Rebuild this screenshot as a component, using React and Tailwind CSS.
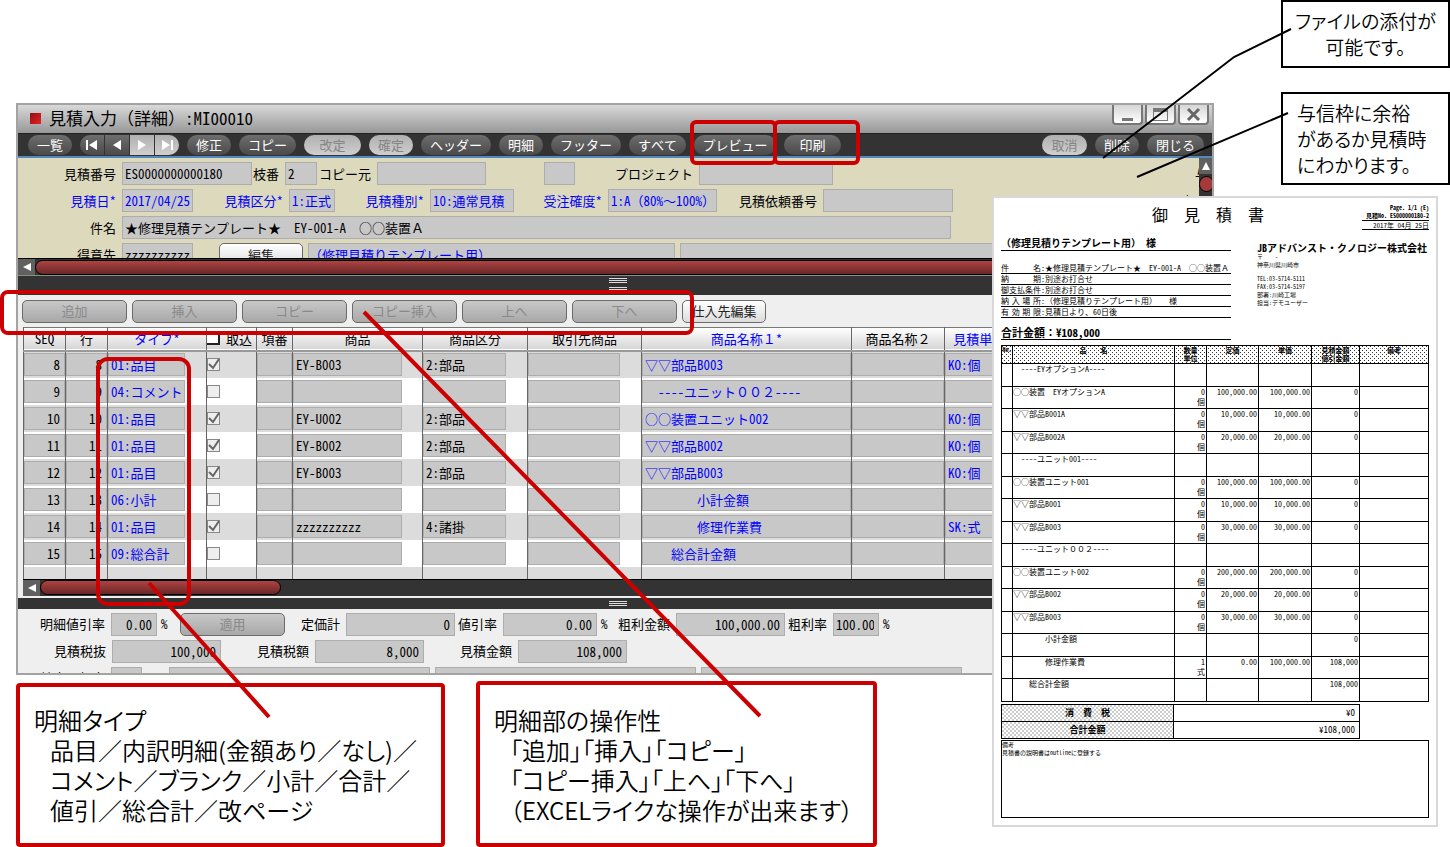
import { useId } from "react";

/* ================= DATA ================= */
const columns = [
  { label: "SEQ", width: "w-[42px]" },
  { label: "行", width: "w-[42px]" },
  { label: "タイプ*", width: "w-[99px]", blue: true },
  { label: "取込", width: "w-[50px]", check: true },
  { label: "項番", width: "w-[36px]" },
  { label: "商品", width: "w-[130px]" },
  { label: "商品区分", width: "w-[105px]" },
  { label: "取引先商品", width: "w-[114px]" },
  { label: "商品名称１*", width: "w-[210px]", blue: true },
  { label: "商品名称２", width: "w-[93px]" },
  { label: "見積単位*", width: "w-[76px]", blue: true },
];

const detailRows = [
  { seq: "8", type: "01:品目", on: true, item: "EY-B003", kind: "2:部品", name: "▽▽部品B003", unit: "KO:個" },
  { seq: "9", type: "04:コメント", on: false, item: "", kind: "", name: "　----ユニット００２----", unit: "" },
  { seq: "10", type: "01:品目", on: true, item: "EY-U002", kind: "2:部品", name: "○○装置ユニット002", unit: "KO:個" },
  { seq: "11", type: "01:品目", on: true, item: "EY-B002", kind: "2:部品", name: "▽▽部品B002", unit: "KO:個" },
  { seq: "12", type: "01:品目", on: true, item: "EY-B003", kind: "2:部品", name: "▽▽部品B003", unit: "KO:個" },
  { seq: "13", type: "06:小計", on: false, item: "", kind: "", name: "　　　　小計金額", unit: "" },
  { seq: "14", type: "01:品目", on: true, item: "zzzzzzzzzz", kind: "4:諸掛", name: "　　　　修理作業費", unit: "SK:式" },
  { seq: "15", type: "09:総合計", on: false, item: "", kind: "", name: "　　総合計金額", unit: "" },
];

const quoteRows = [
  ["　----EYオプションA----"],
  ["○○装置　EYオプションA", "0", "個", "100,000.00", "100,000.00", "0"],
  ["▽▽部品B001A", "0", "個", "10,000.00", "10,000.00", "0"],
  ["▽▽部品B002A", "0", "個", "20,000.00", "20,000.00", "0"],
  ["　----ユニット001----"],
  ["○○装置ユニット001", "0", "個", "100,000.00", "100,000.00", "0"],
  ["▽▽部品B001", "0", "個", "10,000.00", "10,000.00", "0"],
  ["▽▽部品B003", "0", "個", "30,000.00", "30,000.00", "0"],
  ["　----ユニット００２----"],
  ["○○装置ユニット002", "0", "個", "200,000.00", "200,000.00", "0"],
  ["▽▽部品B002", "0", "個", "20,000.00", "20,000.00", "0"],
  ["▽▽部品B003", "0", "個", "30,000.00", "30,000.00", "0"],
  ["　　　　小計金額", "", "", "", "", "0"],
  ["　　　　修理作業費", "1", "式", "0.00", "100,000.00", "108,000"],
  ["　　総合計金額", "", "", "", "", "108,000"],
];

const quoteTerms = [
  ["件名", "★修理見積テンプレート★　EY-001-A　○○装置Ａ"],
  ["納期", "別途お打合せ"],
  ["御支払条件", "別途お打合せ"],
  ["納入場所", "（修理見積りテンプレート用）　　様"],
  ["有効期限", "見積日より、60日後"],
];

/* ================= SHARED STYLES ================= */
const fieldBox = "h-[23px] border border-[#adadad] bg-[#c8c8c8] outline-none";
const dots =
  "bg-[conic-gradient(at_1px_1px,transparent_75%,#333_0),conic-gradient(at_1px_1px,transparent_75%,#333_0)] bg-[length:4px_4px] bg-[position:0_0,2px_2px]";

/* ================= FIELD ================= */
const Field = ({ label, labelWidth, width, value = "", blue, right }) => {
  const id = useId();
  const color = blue ? "text-[#0000ff]" : "text-black";
  return (
    <>
      <label htmlFor={id} className={`shrink-0 pr-1.5 text-right ${labelWidth} ${color}`}>
        {label}
      </label>
      <input
        id={id}
        readOnly
        defaultValue={value}
        className={`shrink-0 pl-0.5 ${right ? "pr-1 text-right" : "pr-0.5"} ${fieldBox} ${width} ${color}`}
      />
    </>
  );
};

/* ================= BUTTONS ================= */
const Pill = ({ children, width, off }) => (
  <button
    disabled={off}
    className={`h-5 shrink-0 rounded-full bg-linear-to-b ${width}
      ${off ? "from-[#b0b0b0] to-[#cfcfcf] text-[#858585]" : "from-[#6e6e6e] to-[#4a4a4a] text-white"}`}
  >
    {children}
  </button>
);

const PushButton = ({ children, width, off }) => (
  <button
    disabled={off}
    className={`h-[23px] shrink-0 rounded-[5px] border border-[#6b6b6b] bg-linear-to-b ${width}
      ${off ? "from-[#c8c8c8] to-[#a8a8a8] text-[#8a8a8a]" : "from-white to-[#dcdcdc] text-[#222]"}`}
  >
    {children}
  </button>
);

const NavButton = ({ label, off, shape, children }) => (
  <button
    aria-label={label}
    className={`flex h-5 w-6 items-center justify-center bg-linear-to-b ${shape}
      ${off ? "from-[#b0b0b0] to-[#cfcfcf]" : "from-[#6e6e6e] to-[#4a4a4a]"}`}
  >
    <svg width="14" height="10" viewBox="0 0 14 10" fill="#fff">
      {children}
    </svg>
  </button>
);

/* ================= SCROLLBAR / SPLITTER ================= */
const HorizontalBar = ({ thumb }) => (
  <div className="flex h-[17px] items-center border-t border-black bg-[#333]">
    <div className="flex h-4 w-[17px] shrink-0 items-center justify-center bg-[#606060]">
      <svg width="8" height="8" viewBox="0 0 8 8" fill="#fff">
        <path d="M8 0v8L0 4z" />
      </svg>
    </div>
    <div className={`h-[15px] rounded-full border border-black bg-linear-to-b from-[#b04343] to-[#6a2727] ${thumb}`} />
  </div>
);

const Grip = () => (
  <div className="h-[5px] w-[18px] border-y border-[#ddd] pt-px">
    <div className="h-px bg-[#ddd]" />
  </div>
);

/* ================= TITLE BAR ================= */
const TitleBar = () => (
  <header className="flex h-7 items-start bg-linear-to-b from-[#d9d9d9] to-[#989898]">
    <div className="ml-3 mt-2 size-[11px] bg-linear-to-br from-[#8f1010] to-[#e82222]" />
    <h1 className="ml-2 mt-px text-[17px] leading-6">見積入力（詳細）:MI00010</h1>
    <div className="ml-auto mr-[3px] flex gap-0.5">
      {[
        ["最小化", <path key="p" d="M10 13h11v3H10z" fill="#777" />],
        ["最大化", <path key="p" d="M8 3h15v13H8zM9 7v8h13V7z" fill="#777" fillRule="evenodd" />],
        ["閉じる", <path key="p" d="M10 4l11 11M21 4l-11 11" stroke="#666" strokeWidth="3" />],
      ].map(([label, icon]) => (
        <button
          key={label}
          aria-label={label}
          className="h-5 w-[31px] rounded-b border-2 border-t-0 border-[#777] bg-linear-to-b from-[#d6d6d6] to-white"
        >
          <svg width="27" height="18" viewBox="2 0 27 18">
            {icon}
          </svg>
        </button>
      ))}
    </div>
  </header>
);

/* ================= TOOLBAR ================= */
const Toolbar = () => (
  <nav className="flex h-[25px] items-center gap-2 border-b-2 border-t border-b-[#5288bd] border-t-[#222] bg-[#333] pl-2.5 pr-2">
    <Pill width="w-11">一覧</Pill>
    <div className="flex gap-px">
      <NavButton label="先頭" shape="rounded-l-full">
        <path d="M1 0h2v10H1zM12 0v10L4 5z" />
      </NavButton>
      <NavButton label="前へ">
        <path d="M11 0v10L3 5z" />
      </NavButton>
      <NavButton label="次へ" off>
        <path d="M3 0v10l8-5z" />
      </NavButton>
      <NavButton label="最後" off shape="rounded-r-full">
        <path d="M11 0h2v10h-2zM2 0v10l8-5z" />
      </NavButton>
    </div>
    <Pill width="w-11">修正</Pill>
    <Pill width="w-[57px]">コピー</Pill>
    <Pill width="w-[57px]" off>改定</Pill>
    <Pill width="w-11" off>確定</Pill>
    <Pill width="w-[70px]">ヘッダー</Pill>
    <Pill width="w-11">明細</Pill>
    <Pill width="w-[70px]">フッター</Pill>
    <Pill width="w-[57px]">すべて</Pill>
    <Pill width="w-[82px]">プレビュー</Pill>
    <Pill width="w-[57px]">印刷</Pill>
    <div className="ml-auto flex gap-2">
      <Pill width="w-[45px]" off>取消</Pill>
      <Pill width="w-11">削除</Pill>
      <Pill width="w-[57px]">閉じる</Pill>
    </div>
  </nav>
);

/* ================= HEADER FORM ================= */
const HeaderForm = () => (
  <div className="flex h-[100px] bg-[#dcd9bd]">
    <div className="min-w-0 flex-1 space-y-1 overflow-hidden pt-1">
      <div className="flex items-center">
        <Field label="見積番号" labelWidth="w-[104px]" width="w-[130px]" value="ES0000000000180" />
        <Field label="枝番" labelWidth="w-[33px]" width="w-8" value="2" />
        <Field label="コピー元" labelWidth="w-[60px]" width="w-[109px]" />
        <Field labelWidth="w-[58px]" width="w-[31px]" />
        <Field label="プロジェクト" labelWidth="w-[124px]" width="w-[134px]" />
        <span className="ml-auto w-1 overflow-hidden">与</span>
      </div>
      <div className="flex items-center">
        <Field label="見積日*" labelWidth="w-[104px]" width="w-[71px]" value="2017/04/25" blue />
        <Field label="見積区分*" labelWidth="w-24" width="w-[46px]" value="1:正式" blue />
        <Field label="見積種別*" labelWidth="w-[95px]" width="w-[84px]" value="10:通常見積" blue />
        <Field label="受注確度*" labelWidth="w-[94px]" width="w-[109px]" value="1:A（80%～100%）" blue />
        <Field label="見積依頼番号" labelWidth="w-[106px]" width="w-[130px]" />
        <span className="ml-auto w-4 overflow-hidden whitespace-nowrap">与</span>
      </div>
      <div className="flex items-center">
        <Field
          label="件名"
          labelWidth="w-[104px]"
          width="w-[829px]"
          value="★修理見積テンプレート★　EY-001-A　○○装置Ａ"
        />
      </div>
      <div className="flex items-center gap-[5px]">
        <div className="mr-[21px] flex items-center">
          <Field label="得意先" labelWidth="w-[104px]" width="w-[71px]" value="zzzzzzzzzz" />
        </div>
        <PushButton width="w-[84px]">編集</PushButton>
        <input
          aria-label="得意先名"
          readOnly
          defaultValue="（修理見積りテンプレート用）"
          className={`w-[367px] text-[#0000ff] ${fieldBox}`}
        />
        <input aria-label="得意先部署" readOnly className={`min-w-0 flex-1 ${fieldBox}`} />
      </div>
    </div>
    <div className="w-[13px] overflow-hidden bg-[#333]">
      <div className="flex h-4 items-center justify-center bg-[#606060]">
        <svg width="8" height="8" viewBox="0 0 8 8" fill="#fff">
          <path d="M0 8h8L4 0z" />
        </svg>
      </div>
      <div className="mt-0.5 h-4 w-[15px] rounded-full border border-black bg-[#a33b3b]" />
    </div>
  </div>
);

/* ================= DETAIL TABLE ================= */
const Cell = ({ value, label, width = "w-full", blue, right }) => (
  <input
    aria-label={label}
    readOnly
    defaultValue={value}
    className={`block pl-0.5 ${right ? "pr-1 text-right" : ""} ${width} ${blue ? "text-[#0000ff]" : ""} ${fieldBox}`}
  />
);

const Check = ({ label, on }) => (
  <label className="relative block size-[13px]">
    <input
      type="checkbox"
      aria-label={label}
      defaultChecked={on}
      className="peer block size-[13px] appearance-none border border-[#888] bg-[#eee]"
    />
    <svg
      className="pointer-events-none absolute inset-0 hidden peer-checked:block"
      viewBox="0 0 13 13"
      fill="none"
      stroke="#666"
      strokeWidth="2"
    >
      <path d="M2 6l4 4 6-9" />
    </svg>
  </label>
);

const DetailTable = () => (
  <table className="w-full table-fixed border-collapse border-t border-t-[#777]">
    <thead>
      <tr className="h-[23px] border-b-2 border-[#999] bg-linear-to-b from-white to-[#d6d6d6]">
        {columns.map((col) => (
          <th
            key={col.label}
            className={`border-l border-l-[#666] p-0 font-normal whitespace-nowrap ${col.width} ${col.blue ? "text-[#0000ff]" : ""}`}
          >
            {col.check ? (
              <label className="flex items-center gap-1.5">
                <input type="checkbox" className="size-[13px] appearance-none border-b-2 border-r-2 border-[#222] bg-white" />
                {col.label}
              </label>
            ) : (
              col.label
            )}
          </th>
        ))}
        <th className="border-l border-l-[#666]" />
      </tr>
    </thead>
    <tbody>
      {detailRows.map((row) => (
        <tr
          key={row.seq}
          className="h-[27px] odd:bg-[#dcdcdc] even:bg-white [&>td]:border-l [&>td]:border-l-[#666] [&>td]:p-0"
        >
          <td><Cell label="SEQ" value={row.seq} right /></td>
          <td><Cell label="行" value={row.seq} right /></td>
          <td><Cell label="タイプ" value={row.type} width="w-[77px]" blue /></td>
          <td><Check label="取込" on={row.on} /></td>
          <td><Cell label="項番" /></td>
          <td><Cell label="商品" value={row.item} width="w-[109px]" /></td>
          <td><Cell label="商品区分" value={row.kind} width="w-[83px]" /></td>
          <td><Cell label="取引先商品" width="w-[92px]" /></td>
          <td><Cell label="商品名称１" value={row.name} blue /></td>
          <td><Cell label="商品名称２" /></td>
          <td><Cell label="見積単位" value={row.unit} blue /></td>
          <td />
        </tr>
      ))}
      <tr className="h-3 bg-[#dcdcdc]">
        {columns.map((col) => (
          <td key={col.label} className="border-l border-l-[#666] p-0" />
        ))}
        <td className="border-l border-l-[#666] p-0" />
      </tr>
    </tbody>
  </table>
);

/* ================= FOOTER FORM ================= */
const FooterForm = () => (
  <div className="h-16 space-y-1 overflow-hidden bg-[#efefef] pt-1">
    <div className="flex items-center">
      <Field label="明細値引率" labelWidth="w-[93px]" width="w-[46px]" value="0.00" right />
      <span className="w-[23px] pl-1">%</span>
      <PushButton width="w-[105px]" off>適用</PushButton>
      <Field label="定価計" labelWidth="w-[61px]" width="w-[109px]" value="0" right />
      <Field label="値引率" labelWidth="w-12" width="w-[94px]" value="0.00" right />
      <span className="w-4 pl-1">%</span>
      <Field label="粗利金額" labelWidth="w-[63px]" width="w-[109px]" value="100,000.00" right />
      <Field label="粗利率" labelWidth="w-12" width="w-[46px]" value="100.00" right />
      <span className="pl-1">%</span>
    </div>
    <div className="flex items-center">
      <Field label="見積税抜" labelWidth="w-[94px]" width="w-[109px]" value="100,000" right />
      <Field label="見積税額" labelWidth="w-[94px]" width="w-[109px]" value="8,000" right />
      <Field label="見積金額" labelWidth="w-[94px]" width="w-[109px]" value="108,000" right />
    </div>
    <div className="flex items-center gap-[5px]">
      <div className="mr-[22px] flex items-center">
        <Field label="社内原価率" labelWidth="w-[93px]" width="w-[31px]" />
      </div>
      <input aria-label="備考１" readOnly className={`w-[261px] ${fieldBox}`} />
      <input aria-label="備考２" readOnly className={`w-[261px] ${fieldBox}`} />
      <input aria-label="備考３" readOnly className={`w-[261px] ${fieldBox}`} />
    </div>
  </div>
);

/* ================= PRINTED QUOTE ================= */
const Quote = () => (
  <article className="absolute right-3 top-[196px] w-[446px] border-2 border-[#d8d8d8] bg-white px-[7px] pb-[7px] pt-1.5 text-[8px] leading-[10px] text-black">
    <div className="flex h-[34px] justify-end">
      <h2 className="mr-[98px] text-[16px] leading-5">御　見　積　書</h2>
      <div className="w-[67px] text-right text-[7px] leading-2 whitespace-nowrap">
        <p className="text-[6px] font-bold">Page. 1/1 (E)</p>
        <p className="h-[9px] border-b border-black text-[6px] font-bold">見積No. ES000000180-2</p>
        <p className="h-[9px] border-b border-black">2017年 04月 25日</p>
      </div>
    </div>

    <div className="flex justify-between">
      <div className="w-[230px] whitespace-nowrap">
        <h3 className="h-[13px] border-b border-black text-[10px] font-bold leading-[10px]">
          （修理見積りテンプレート用） 様
        </h3>
        <dl className="mt-3">
          {quoteTerms.map(([name, value]) => (
            <div key={name} className="flex h-[11px] border-b border-black">
              <dt className="flex w-10 shrink-0 justify-between">
                {[...name].map((char) => (
                  <span key={char}>{char}</span>
                ))}
              </dt>
              <dd className="flex">
                <span className="w-1">:</span>
                {value}
              </dd>
            </div>
          ))}
        </dl>
        <p className="mt-2 border-b border-black text-[11px] font-bold leading-[13px]">合計金額：¥108,000</p>
      </div>
      <address className="mr-1 mt-1 w-[168px] whitespace-nowrap text-[6px] not-italic leading-2">
        <p className="text-[10px] font-bold leading-[11px]">JBアドバンスト・クノロジー株式会社</p>
        <p>〒　　-</p>
        <p>神奈川県川崎市</p>
        <p className="mt-1.5">TEL:03-5714-5111</p>
        <p>FAX:03-5714-5197</p>
        <p>部署:川崎工場</p>
        <p>担当:デモユーザー</p>
      </address>
    </div>

    <table className="mt-[5px] w-full table-fixed border-collapse border border-black">
      <thead>
        <tr className={`h-[18px] align-top text-[7px] leading-2 [&>th]:border [&>th]:border-black [&>th]:p-0 ${dots}`}>
          <th className="w-[11px] text-[6px]">No.</th>
          <th className="w-[162px]">品　　名</th>
          <th className="w-8">数量<br />単位</th>
          <th className="w-[52px]">定価</th>
          <th className="w-[53px]">単価</th>
          <th className="w-12">見積金額<br />値引金額</th>
          <th>備考</th>
        </tr>
      </thead>
      <tbody>
        {quoteRows.map(([name, count, unit, list, price, total], i) => (
          <tr
            key={i}
            className="odd:h-[23px] even:h-[22px] align-top text-right [&>td]:border [&>td]:border-black [&>td]:p-0 [&>td]:pr-px"
          >
            <td />
            <td className="whitespace-nowrap text-left">{name}</td>
            <td>
              {count}
              <br />
              {unit}
            </td>
            <td>{list}</td>
            <td>{price}</td>
            <td>{total}</td>
            <td />
          </tr>
        ))}
      </tbody>
    </table>

    <table className="mt-0.5 w-[359px] table-fixed border-collapse text-[9px]">
      <tbody>
        <tr className="h-[17px]">
          <th className={`w-[172px] border border-black p-0 ${dots}`}>消　費　税</th>
          <td className="border border-black p-0 pr-1 text-right">¥0</td>
        </tr>
        <tr className="h-[17px]">
          <th className={`border border-black p-0 ${dots}`}>合計金額</th>
          <td className="border border-black p-0 pr-1 text-right">¥108,000</td>
        </tr>
      </tbody>
    </table>

    <div className="mt-px h-[78px] border border-black text-[6px] leading-2">
      <p>備考</p>
      <p>見積書の説明書はoutlineに登録する</p>
    </div>
  </article>
);

/* ================= NOTES ================= */
const SideNote = ({ place, children }) => (
  <aside
    className={`absolute right-0 w-[169px] border-2 border-black bg-white text-[19px] font-[350] leading-[26px] whitespace-nowrap
      [font-family:'Noto_Sans_CJK_JP',sans-serif] [font-feature-settings:'palt'] ${place}`}
  >
    {children}
  </aside>
);

const Note = ({ title, lines, box }) => (
  <section
    className={`rounded-sm border-4 border-[#cc0000] bg-white pb-[18px] pl-3.5 text-[24px] font-[350] leading-[30px] whitespace-nowrap
      [font-family:'Noto_Sans_CJK_JP',sans-serif] [font-feature-settings:'palt'] ${box}`}
  >
    <h2>{title}</h2>
    {lines.map((line) => (
      <p key={line} className="pl-4">
        {line}
      </p>
    ))}
  </section>
);

const Highlight = ({ place }) => (
  <div className={`pointer-events-none absolute border-4 border-[#cc0000] ${place}`} />
);

/* ================= PAGE ================= */
const App = () => {
  return (
    <main className="relative min-h-screen overflow-hidden bg-white pl-4 pt-[103px] text-black [font-family:'Noto_Sans_Mono_CJK_JP','Noto_Sans_CJK_JP',monospace]">
      <section className="mr-[236px] border-2 border-[#a3a3a3] bg-[#efefef] text-[13px] leading-[18px]">
        <TitleBar />
        <Toolbar />
        <HeaderForm />
        <HorizontalBar thumb="flex-1" />
        <div className="flex h-5 flex-col gap-1 border-t border-[#8a9080] bg-[#333] pl-[591px] pt-0.5">
          <Grip />
          <Grip />
        </div>
        <div className="flex h-8 items-center gap-[5px] pl-1">
          <PushButton width="w-[105px]" off>追加</PushButton>
          <PushButton width="w-[105px]" off>挿入</PushButton>
          <PushButton width="w-[105px]" off>コピー</PushButton>
          <PushButton width="w-[105px]" off>コピー挿入</PushButton>
          <PushButton width="w-[105px]" off>上へ</PushButton>
          <PushButton width="w-[105px]" off>下へ</PushButton>
          <PushButton width="w-[84px]">仕入先編集</PushButton>
        </div>
        <div className="pl-[5px]">
          <DetailTable />
          <HorizontalBar thumb="w-[241px]" />
        </div>
        <div className="mt-0.5 flex h-[11px] items-center bg-[#333] pl-[591px]">
          <Grip />
        </div>
        <FooterForm />
      </section>

      <div className="mt-1.5 flex items-end gap-[31px]">
        <Note
          box="w-[429px] pt-[18px]"
          title="明細タイプ"
          lines={["品目／内訳明細(金額あり／なし)／", "コメント／ブランク／小計／合計／", "値引／総合計／改ページ"]}
        />
        <Note
          box="w-[401px] pt-5"
          title="明細部の操作性"
          lines={["「追加」「挿入」「コピー」", "「コピー挿入」「上へ」「下へ」", "（EXCELライクな操作が出来ます）"]}
        />
      </div>

      <Quote />

      <SideNote place="top-0 h-[68px] pt-1.5 text-center">
        ファイルの添付が
        <br />
        可能です。
      </SideNote>
      <SideNote place="top-[92px] h-[93px] pl-3.5 pt-1.5">
        与信枠に余裕
        <br />
        があるか見積時
        <br />
        にわかります。
      </SideNote>

      <Highlight place="left-[690px] top-[120px] h-[45px] w-[87px] rounded-md" />
      <Highlight place="left-[773px] top-[120px] h-[45px] w-[87px] rounded-md" />
      <Highlight place="left-0 top-[290px] h-[45px] w-[694px] rounded-lg" />
      <Highlight place="left-[96px] top-[357px] h-[249px] w-[95px] rounded-xl" />

      <svg className="pointer-events-none absolute left-0 top-0" width="1450" height="847" fill="none">
        <path d="M149 583l120 134M364 312l396 404" stroke="#cc0000" strokeWidth="4" />
        <path d="M1291 29l-57 28-131 101M1288 113l-151 64" stroke="#000" strokeWidth="2" />
      </svg>
    </main>
  );
};

export default App;
